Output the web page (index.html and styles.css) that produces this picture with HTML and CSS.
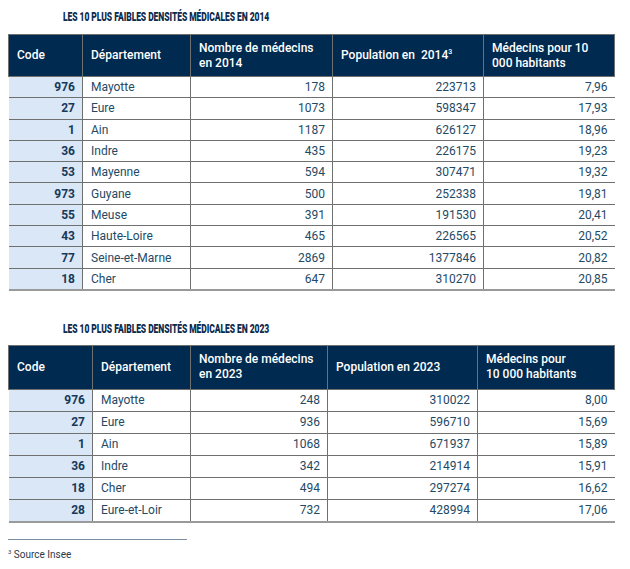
FILE: index.html
```html
<!DOCTYPE html>
<html lang="fr">
<head>
<meta charset="utf-8">
<link rel="stylesheet" href="styles.css">
</head>
<body>
<div class="page">
  <h2 class="title"><span>Les 10 plus faibles densités médicales en 2014</span></h2>
  <table class="tbl t1">
    <colgroup>
      <col class="c-code"><col class="c-dep"><col class="c-nb"><col class="c-pop"><col class="c-med">
    </colgroup>
    <thead>
      <tr><th>Code</th><th>Département</th><th>Nombre de médecins<br>en 2014</th><th>Population en&nbsp; 2014<sup>3</sup></th><th>Médecins pour 10<br>000 habitants</th></tr>
    </thead>
    <tbody>
      <tr><td class="code">976</td><td>Mayotte</td><td class="num">178</td><td class="num">223713</td><td class="num">7,96</td></tr>
      <tr><td class="code">27</td><td>Eure</td><td class="num">1073</td><td class="num">598347</td><td class="num">17,93</td></tr>
      <tr><td class="code">1</td><td>Ain</td><td class="num">1187</td><td class="num">626127</td><td class="num">18,96</td></tr>
      <tr><td class="code">36</td><td>Indre</td><td class="num">435</td><td class="num">226175</td><td class="num">19,23</td></tr>
      <tr><td class="code">53</td><td>Mayenne</td><td class="num">594</td><td class="num">307471</td><td class="num">19,32</td></tr>
      <tr><td class="code">973</td><td>Guyane</td><td class="num">500</td><td class="num">252338</td><td class="num">19,81</td></tr>
      <tr><td class="code">55</td><td>Meuse</td><td class="num">391</td><td class="num">191530</td><td class="num">20,41</td></tr>
      <tr><td class="code">43</td><td>Haute-Loire</td><td class="num">465</td><td class="num">226565</td><td class="num">20,52</td></tr>
      <tr><td class="code">77</td><td>Seine-et-Marne</td><td class="num">2869</td><td class="num">1377846</td><td class="num">20,82</td></tr>
      <tr><td class="code">18</td><td>Cher</td><td class="num">647</td><td class="num">310270</td><td class="num">20,85</td></tr>
    </tbody>
  </table>

  <h2 class="title title2"><span>Les 10 plus faibles densités médicales en 2023</span></h2>
  <table class="tbl t2">
    <colgroup>
      <col class="c-code"><col class="c-dep"><col class="c-nb"><col class="c-pop"><col class="c-med">
    </colgroup>
    <thead>
      <tr><th>Code</th><th>Département</th><th>Nombre de médecins<br>en 2023</th><th>Population en 2023</th><th>Médecins pour<br>10 000 habitants</th></tr>
    </thead>
    <tbody>
      <tr><td class="code">976</td><td>Mayotte</td><td class="num">248</td><td class="num">310022</td><td class="num">8,00</td></tr>
      <tr><td class="code">27</td><td>Eure</td><td class="num">936</td><td class="num">596710</td><td class="num">15,69</td></tr>
      <tr><td class="code">1</td><td>Ain</td><td class="num">1068</td><td class="num">671937</td><td class="num">15,89</td></tr>
      <tr><td class="code">36</td><td>Indre</td><td class="num">342</td><td class="num">214914</td><td class="num">15,91</td></tr>
      <tr><td class="code">18</td><td>Cher</td><td class="num">494</td><td class="num">297274</td><td class="num">16,62</td></tr>
      <tr><td class="code">28</td><td>Eure-et-Loir</td><td class="num">732</td><td class="num">428994</td><td class="num">17,06</td></tr>
    </tbody>
  </table>

  <div class="footnote">
    <div class="fn-rule"></div>
    <p class="fn-text"><sup>3</sup> Source Insee</p>
  </div>
</div>
</body>
</html>
```

FILE: styles.css
```css
html, body {
  margin: 0;
  padding: 0;
  background: #ffffff;
}

.page {
  padding: 0 16px 0 8px;
  font-family: Roboto, "Liberation Sans", sans-serif;
  color: #1e4a66;
}

.title {
  margin: 0;
  padding: 11px 0 0 55px;
  height: 34px;
  box-sizing: border-box;
  font-family: Roboto, "Liberation Sans", sans-serif;
  font-weight: 900;
  font-size: 12px;
  line-height: 12px;
  text-transform: uppercase;
  color: #0d2b4e;
  letter-spacing: -0.1px;
}

.title span {
  display: inline-block;
  transform: scaleX(0.71);
  transform-origin: left center;
  white-space: nowrap;
}

.title2 {
  margin-top: 21px;
  height: 33px;
}

.tbl {
  width: 606px;
  border-collapse: collapse;
  table-layout: fixed;
  font-size: 12px;
}

.t1 .c-code { width: 74px; }
.t1 .c-dep { width: 108px; }
.t1 .c-nb { width: 142px; }
.t1 .c-pop { width: 151px; }
.t1 .c-med { width: 131px; }

.t2 .c-code { width: 84px; }
.t2 .c-dep { width: 98px; }
.t2 .c-nb { width: 137px; }
.t2 .c-pop { width: 150px; }
.t2 .c-med { width: 137px; }

.tbl th {
  background: #002a50;
  color: #ffffff;
  font-weight: 500;
  text-align: left;
  vertical-align: middle;
  padding: 0 8px;
  line-height: 15px;
  height: 41px;
  border: 1px solid #6f7070;
}

.t2 th { height: 43px; }

.tbl th sup {
  font-size: 7px;
  line-height: 0;
  vertical-align: 5px;
}

.tbl td {
  height: 20.3px;
  padding: 0 7px 0 8px;
  line-height: 14px;
  border: 1px solid #6f7070;
  color: #1e4a66;
  white-space: nowrap;
}

.t2 td { height: 21px; }

.tbl td.code {
  background: #d9e7f6;
  text-align: right;
  font-weight: 700;
  color: #17385a;
  border-left: none;
}

.tbl td.num {
  text-align: right;
}

.tbl tbody tr:last-child td {
  border-bottom: 2px solid #9a9a9a;
}

.t2 td:nth-child(4),
.t2 td:nth-child(5) {
  border-left-color: #a9a9a9;
}

.tbl td:last-child {
  border-right: none;
}

.footnote {
  padding-top: 16px;
}

.fn-rule {
  width: 179px;
  height: 1px;
  background: #7a8ea3;
}

.fn-text {
  margin: 9px 0 0 0;
  font-size: 10px;
  line-height: 12px;
  color: #2a3a4a;
}

.fn-text sup {
  font-size: 6px;
  vertical-align: 4px;
  line-height: 0;
}
```
